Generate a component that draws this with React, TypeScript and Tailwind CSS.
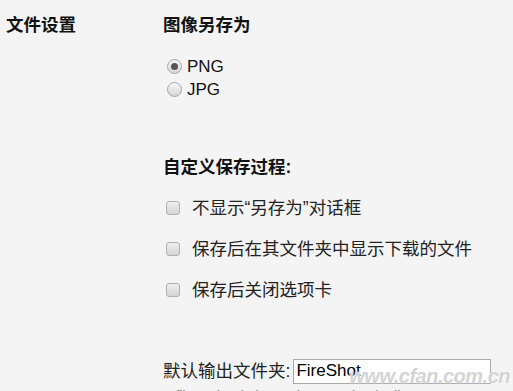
import React from "react";

const font = { fontFamily: '"Liberation Sans", "Noto Sans CJK SC", sans-serif' };

function Radio({ checked, label }: { checked?: boolean; label: string }) {
  return (
    <label className="flex h-[23px] items-center">
      <span className="flex h-[15px] w-[15px] items-center justify-center rounded-full border border-[#a5a5a5] bg-gradient-to-b from-[#f8f8f8] to-[#d6d6d6]">
        {checked && <span className="h-[7px] w-[7px] rounded-full bg-[#555]" />}
      </span>
      <span className="ml-[5px] text-[17px] text-[#111]">{label}</span>
    </label>
  );
}

function Check({ label }: { label: string }) {
  return (
    <label className="flex h-[20px] items-center">
      <span className="ml-[3px] h-[14px] w-[14px] rounded-[3px] border border-[#b0b0b0] bg-gradient-to-b from-[#f0f0f0] to-[#d4d4d4]" />
      <span className="ml-[12px] text-[17.5px] text-[#222]">{label}</span>
    </label>
  );
}

export default function App() {
  return (
    <div className="relative h-[391px] w-[513px] overflow-hidden bg-[#f4f4f4]" style={font}>
      <div className="flex pt-[15px]">
        <div className="w-[163px] shrink-0 pl-[6px]">
          <h2 className="text-[17.5px] font-bold leading-[20px] text-[#111]">文件设置</h2>
        </div>
        <div className="min-w-0 flex-1">
          <h2 className="text-[17.5px] font-bold leading-[20px] text-[#111]">图像另存为</h2>
          <div className="mt-[20px] pl-[4px]">
            <Radio checked label="PNG" />
            <Radio label="JPG" />
          </div>
          <h3 className="mt-[56px] text-[17.5px] font-bold leading-[20px] text-[#111]">自定义保存过程:</h3>
          <div className="mt-[21px] flex flex-col gap-[21px]">
            <Check label="不显示“另存为”对话框" />
            <Check label="保存后在其文件夹中显示下载的文件" />
            <Check label="保存后关闭选项卡" />
          </div>
          <div className="mt-[58px] flex items-center">
            <span className="text-[17.5px] text-[#222]">默认输出文件夹:</span>
            <input
              readOnly
              value="FireShot"
              className="ml-[3px] h-[25px] w-[198px] border border-[#a9a9a9] bg-white px-[2px] text-[17px] text-black outline-none"
            />
          </div>
          <p className="mt-[2px] whitespace-nowrap text-[14px] text-[#777]">
            A file path relative to the Downloads directory
          </p>
        </div>
      </div>
      <div className="pointer-events-none absolute right-[3px] top-[361px] text-[20px] font-bold italic tracking-[-0.5px] text-[#d4d4d4] [text-shadow:0_0_2px_#fff]">
        www.cfan.com.cn
      </div>
    </div>
  );
}
